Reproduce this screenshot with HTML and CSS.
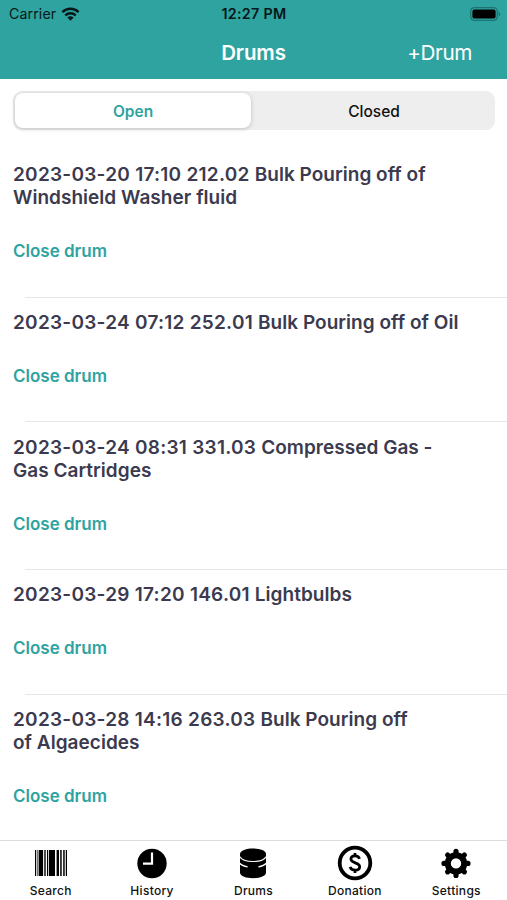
FILE: index.html
```
<!DOCTYPE html>
<html lang="en">
<head>
<meta charset="utf-8">
<meta name="viewport" content="width=device-width">
<title>Drums</title>
<link rel="stylesheet" href="styles.css">
</head>
<body>
<div class="app">
  <header class="header">
    <div class="status">
      <div class="carrier"><span>Carrier</span>
        <svg class="wifi" viewBox="0 0 18 14" width="19" height="14"><g fill="none" stroke="#061718" stroke-width="2.4"><path d="M.9 5.1a11.6 11.6 0 0 1 16.2 0"/><path d="M3.8 8.4a7.4 7.4 0 0 1 10.4 0"/></g><path fill="#061718" d="M9 13.8 5.9 10.6a4.5 4.5 0 0 1 6.2 0z"/></svg>
      </div>
      <div class="time">12:27 PM</div>
      <svg class="battery" viewBox="0 0 31 14" width="31" height="14"><rect x=".7" y=".7" width="26.6" height="12.6" rx="3.7" fill="none" stroke="#1c7472" stroke-width="1.3"/><rect x="2.4" y="2.4" width="23.2" height="9.2" rx="2" fill="#000"/><path d="M28.7 4.8v4.4q1.7-.7 1.7-2.2t-1.7-2.2z" fill="#1c7472"/></svg>
    </div>
    <div class="nav"><span></span><h1>Drums</h1><a class="add">+Drum</a></div>
  </header>
  <main class="content">
    <div class="segments"><div class="segment active">Open</div><div class="segment">Closed</div></div>
    <ul class="list">
      <li class="row"><h2><span class="code">2023-03-20 17:10 212.02 </span>Bulk Pouring off of<br>Windshield Washer fluid</h2><a class="close">Close drum</a></li>
      <li class="row"><h2><span class="code">2023-03-24 07:12 252.01 </span>Bulk Pouring off of Oil</h2><a class="close">Close drum</a></li>
      <li class="row"><h2><span class="code">2023-03-24 08:31 331.03 </span>Compressed Gas -<br>Gas Cartridges</h2><a class="close">Close drum</a></li>
      <li class="row"><h2><span class="code">2023-03-29 17:20 146.01 </span>Lightbulbs</h2><a class="close">Close drum</a></li>
      <li class="row"><h2><span class="code">2023-03-28 14:16 263.03 </span>Bulk Pouring off<br>of Algaecides</h2><a class="close">Close drum</a></li>
    </ul>
  </main>
  <nav class="tabs">
    <a class="tab"><svg viewBox="0 0 36 36" width="36" height="36"><path d="M2 5h1.2v26H2zM5.7 5h4.4v26H5.700zM11.300 5h1.400v26h-1.400zM14 5h1.200v26H14zM16 5h6v26h-6zM23.600 5h2.400v26h-2.400zM27.200 5h1.500v26h-1.500zM30.200 5h1.500v26h-1.500zM32.800 5h1.200v26h-1.200z"/><path d="M4 5h1.200v26H4z" opacity=".55"/></svg><span>Search</span></a>
    <a class="tab"><svg viewBox="0 0 36 36" width="36" height="36"><circle cx="18" cy="18.500" r="14.700"/><path d="M18 7.500v11.200H9" fill="none" stroke="#fff" stroke-width="2.200"/></svg><span>History</span></a>
    <a class="tab"><svg viewBox="0 0 36 36" width="36" height="36"><path d="M5 9C5 1.500 31 1.500 31 9v18.500c0 7.600-26 7.600-26 0z"/><g fill="none" stroke="#fff"><path d="M5 11.700c3 6.400 23 6.400 26 0" stroke-width="1.200"/><path d="M4.600 18.300c2 2.300 4.500 3 8 3.600M31.400 18.300c-2 2.300-4.500 3-8 3.600" stroke-width="1.400"/></g></svg><span>Drums</span></a>
    <a class="tab"><svg viewBox="0 0 36 36" width="36" height="36"><circle cx="18" cy="18" r="15.300" fill="none" stroke="#000" stroke-width="3.800"/><path d="M22.500 13.800c-1.100-4-8.600-3.700-8.600.3 0 4.700 8.800 2.900 8.800 7.700 0 4.400-8.400 4.600-9.500.1M18 8v3.200M18 24.800V28" fill="none" stroke="#000" stroke-width="2.700"/></svg><span>Donation</span></a>
    <a class="tab"><svg viewBox="0 0 36 36" width="36" height="36"><g fill="none" stroke="#000"><circle cx="18" cy="18.400" r="8.200" stroke-width="6"/><path stroke-width="5.200" stroke-linecap="round" d="M18 7.900V6.400M18 28.900V30.400M7.500 18.400H6M28.500 18.400H30M10.600 11l-1-1M25.400 11l1-1M10.600 25.800l-1 1M25.400 25.800l1 1"/></g></svg><span>Settings</span></a>
  </nav>
</div>
</body>
</html>
```
FILE: styles.css
```
* { box-sizing: border-box; }
body { margin: 0; background: #fff; font-family: Inter, "Liberation Sans", sans-serif; }
.app { height: 900px; display: flex; flex-direction: column; overflow: hidden; }
.header { flex: none; height: 79px; background: #2fa39f; }
.status { height: 27px; display: grid; grid-template-columns: 1fr auto 1fr; align-items: center; padding: 0 6px 0 9px; color: #061718; font-size: 14.2px; }
.carrier { display: flex; align-items: center; gap: 5px; letter-spacing: .1px; }
.time { font-weight: 600; font-size: 14.3px; letter-spacing: .3px; margin-right: 2px; }
.battery { justify-self: end; }
.nav { height: 50px; display: grid; grid-template-columns: 1fr auto 1fr; align-items: center; padding: 0 35px; color: #fff; }
.nav h1 { margin: 0; font-size: 20.5px; font-weight: 600; letter-spacing: -.1px; }
.add { justify-self: end; font-size: 20.7px; letter-spacing: -.4px; }
.content { flex: 1; min-height: 0; padding-top: 12px; overflow: hidden; }
.segments { height: 39px; margin: 0 12px 0 13px; padding: 2px; display: flex; background: #eee; border-radius: 9px; }
.segment { flex: 1; display: flex; align-items: center; justify-content: center; padding: 2px 0 0 4px; font-size: 15.5px; font-weight: 500; color: #111; border-radius: 8px; }
.segment.active { flex: 0 0 236px; padding-left: 0; background: #fff; color: #2fa39f; font-weight: 600; box-shadow: 0 1px 4px rgba(0,0,0,.2); }
.list { list-style: none; margin: 20.2px 0 0; padding: 0; }
.row { padding: 12.7px 13px 35.2px; background: linear-gradient(#e6e6e8, #e6e6e8) 25px 100% / 100% 1.4px no-repeat; }
.row h2 { margin: 0 0 30.5px; color: #3b3a4e; font-size: 19px; line-height: 23.3px; font-weight: 600; letter-spacing: .03px; white-space: nowrap; }
.code { letter-spacing: .26px; }
.close { display: block; color: #2fa39f; font-size: 17px; line-height: 23px; font-weight: 600; }
.tabs { flex: none; height: 60px; display: grid; grid-template-columns: repeat(5, 1fr); border-top: 1px solid #dcdcdc; background: #fff; }
.tab { display: flex; flex-direction: column; align-items: center; padding-top: 4px; font-size: 12px; line-height: 16px; font-weight: 500; color: #111; gap: 2px; letter-spacing: .3px; }
```
